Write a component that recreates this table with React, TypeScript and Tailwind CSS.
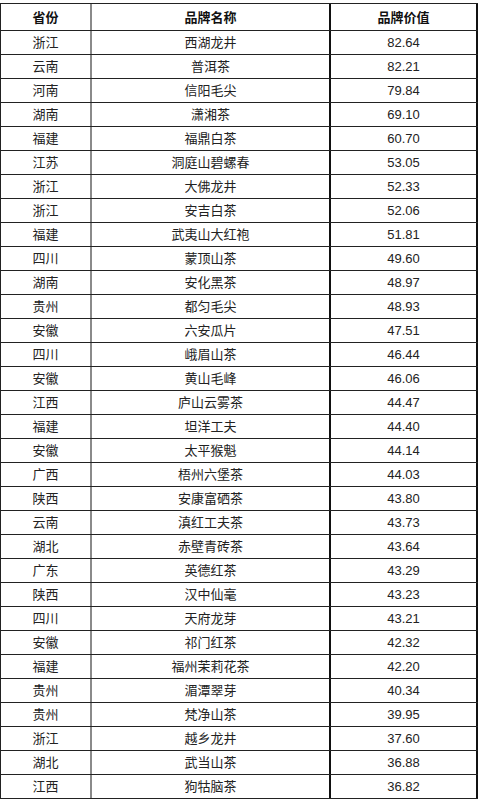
import React from "react";

const rows: [string, string, string][] = [
  ["浙江", "西湖龙井", "82.64"],
  ["云南", "普洱茶", "82.21"],
  ["河南", "信阳毛尖", "79.84"],
  ["湖南", "潇湘茶", "69.10"],
  ["福建", "福鼎白茶", "60.70"],
  ["江苏", "洞庭山碧螺春", "53.05"],
  ["浙江", "大佛龙井", "52.33"],
  ["浙江", "安吉白茶", "52.06"],
  ["福建", "武夷山大红袍", "51.81"],
  ["四川", "蒙顶山茶", "49.60"],
  ["湖南", "安化黑茶", "48.97"],
  ["贵州", "都匀毛尖", "48.93"],
  ["安徽", "六安瓜片", "47.51"],
  ["四川", "峨眉山茶", "46.44"],
  ["安徽", "黄山毛峰", "46.06"],
  ["江西", "庐山云雾茶", "44.47"],
  ["福建", "坦洋工夫", "44.40"],
  ["安徽", "太平猴魁", "44.14"],
  ["广西", "梧州六堡茶", "44.03"],
  ["陕西", "安康富硒茶", "43.80"],
  ["云南", "滇红工夫茶", "43.73"],
  ["湖北", "赤壁青砖茶", "43.64"],
  ["广东", "英德红茶", "43.29"],
  ["陕西", "汉中仙毫", "43.23"],
  ["四川", "天府龙芽", "43.21"],
  ["安徽", "祁门红茶", "42.32"],
  ["福建", "福州茉莉花茶", "42.20"],
  ["贵州", "湄潭翠芽", "40.34"],
  ["贵州", "梵净山茶", "39.95"],
  ["浙江", "越乡龙井", "37.60"],
  ["湖北", "武当山茶", "36.88"],
  ["江西", "狗牯脑茶", "36.82"],
];

function Row({ cells, header }: { cells: [string, string, string]; header?: boolean }) {
  return (
    <div
      className={
        "flex border-l border-b border-[#222] " +
        (header ? "h-[28px] border-t" : "h-[24px]")
      }
    >
      <div className="w-[91px] shrink-0 border-r-2 border-[#8a8a8a] flex items-center justify-center">
        {cells[0]}
      </div>
      <div className="w-[239px] shrink-0 border-r-2 border-[#111] flex items-center justify-center">
        {cells[1]}
      </div>
      <div className="w-[147px] shrink-0 border-r-2 border-[#111] flex items-center justify-center">
        {cells[2]}
      </div>
    </div>
  );
}

export default function App() {
  return (
    <div
      className="w-[482px] h-[800px] overflow-hidden bg-white pt-[3px] text-[13px] text-[#222] leading-none"
      style={{ fontFamily: '"Liberation Sans", "Noto Sans CJK SC", sans-serif' }}
    >
      <div className="w-[478px]">
        <div className="font-bold text-[#111]">
          <Row cells={["省份", "品牌名称", "品牌价值"]} header />
        </div>
        {rows.map((r, i) => (
          <Row key={i} cells={r} />
        ))}
      </div>
    </div>
  );
}
